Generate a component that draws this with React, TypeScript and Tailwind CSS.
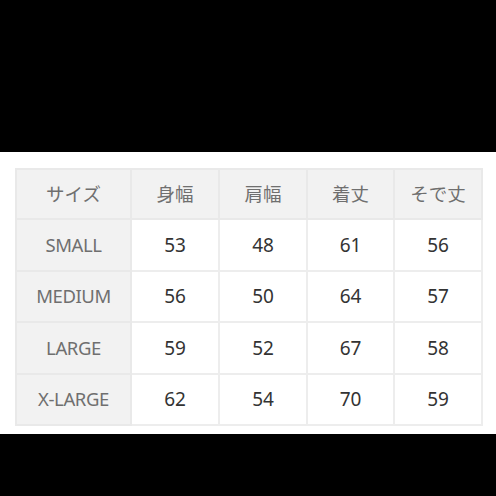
const headers = ["サイズ", "身幅", "肩幅", "着丈", "そで丈"]

const rows = [
  { size: "SMALL", values: [53, 48, 61, 56] },
  { size: "MEDIUM", values: [56, 50, 64, 57] },
  { size: "LARGE", values: [59, 52, 67, 58] },
  { size: "X-LARGE", values: [62, 54, 70, 59] },
]

const font = { fontFamily: '"Noto Sans", "Noto Sans CJK JP", sans-serif' }

export default function App() {
  return (
    <div className="w-[496px] h-[496px] flex flex-col bg-black" style={font}>
      <div className="h-[152px] bg-black" />
      <div className="bg-white pt-[16px] pb-[8px] pl-[15px] pr-[15px]">
        <table className="border-collapse table-fixed w-[466px]">
          <colgroup>
            <col className="w-[115px]" />
            <col className="w-[88px]" />
            <col className="w-[88px]" />
            <col className="w-[87px]" />
            <col className="w-[88px]" />
          </colgroup>
          <thead>
            <tr className="h-[50px] bg-[#f2f2f2]">
              {headers.map((h) => (
                <th
                  key={h}
                  className="border-2 border-[#e9e9e9] text-[18.5px] font-normal text-[#6f6f6f] text-center"
                >
                  {h}
                </th>
              ))}
            </tr>
          </thead>
          <tbody>
            {rows.map((r) => (
              <tr key={r.size} className="h-[51.5px]">
                <td className="border-2 border-[#e9e9e9] bg-[#f2f2f2] text-[18.5px] text-[#6f6f6f] text-center tracking-[-0.4px]">
                  {r.size}
                </td>
                {r.values.map((v, i) => (
                  <td
                    key={i}
                    className="border-2 border-[#ededed] bg-white text-[19px] text-[#333333] text-center"
                  >
                    {v}
                  </td>
                ))}
              </tr>
            ))}
          </tbody>
        </table>
      </div>
      <div className="flex-1 bg-black" />
    </div>
  )
}
